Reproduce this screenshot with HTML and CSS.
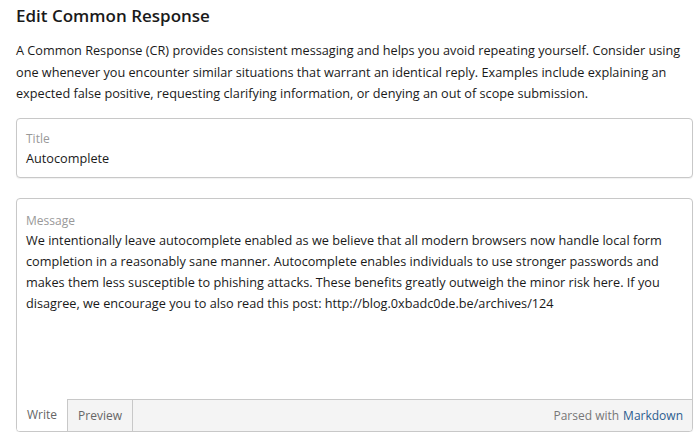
FILE: index.html
```html
<!DOCTYPE html>
<html>
<head>
<meta charset="utf-8">
<link rel="stylesheet" href="styles.css">
</head>
<body>
<div class="page">
  <h1 class="heading">Edit Common Response</h1>
  <p class="intro">A Common Response (CR) provides consistent messaging and helps you avoid repeating yourself. Consider using one whenever you encounter similar situations that warrant an identical reply. Examples include explaining an expected false positive, requesting clarifying information, or denying an out of scope submission.</p>
  <div class="field title-field">
    <div class="label">Title</div>
    <div class="value">Autocomplete</div>
  </div>
  <div class="field message-field">
    <div class="message-body">
      <div class="label">Message</div>
      <div class="value">We intentionally leave autocomplete enabled as we believe that all modern browsers now handle local form completion in a reasonably sane manner. Autocomplete enables individuals to use stronger passwords and makes them less susceptible to phishing attacks. These benefits greatly outweigh the minor risk here. If you disagree, we encourage you to also read this post: http://blog.0xbadc0de.be/archives/124</div>
    </div>
    <div class="toolbar">
      <div class="tab active">Write</div>
      <div class="tab">Preview</div>
      <div class="spacer"></div>
      <div class="parsed">Parsed with <span class="md">Markdown</span></div>
    </div>
  </div>
</div>
</body>
</html>
```
FILE: styles.css
```css
html, body {
  margin: 0;
  padding: 0;
  background: #fff;
}
body {
  font-family: "Open Sans", "Noto Sans", sans-serif;
  color: #1a1a1a;
}
.page {
  padding: 0 6px 0 16px;
}
.heading {
  margin: 0;
  padding-top: 4px;
  font-size: 17px;
  font-weight: 600;
  line-height: 24px;
  color: #1a1a1a;
}
.intro {
  margin: 12px 0 0;
  font-size: 12.7px;
  line-height: 21.5px;
  color: #1a1a1a;
}
.field {
  border: 1px solid #c8c8c8;
  border-radius: 4px;
  box-shadow: 0 1px 1px rgba(0,0,0,0.06);
  background: #fff;
}
.title-field {
  margin-top: 13px;
  height: 60px;
  box-sizing: border-box;
  padding: 11px 9px 0;
}
.label {
  font-size: 12px;
  line-height: 17px;
  color: #999;
}
.value {
  font-size: 12.7px;
  line-height: 21px;
  color: #1a1a1a;
}
.title-field .value {
  margin-top: 1px;
}
.message-field {
  margin-top: 20px;
  overflow: hidden;
}
.message-body {
  height: 200px;
  padding: 13px 9px 0;
  box-sizing: border-box;
}
.message-body .value {
  margin-top: 1px;
}
.toolbar {
  display: flex;
  height: 31px;
  background: #f4f4f4;
  border-top: 1px solid #c8c8c8;
  font-size: 12px;
}
.tab {
  display: flex;
  align-items: center;
  padding: 0 10px;
  color: #666;
  background: #f4f4f4;
  border-right: 1px solid #c8c8c8;
}
.tab.active {
  background: #fff;
  margin-top: -1px;
  color: #666;
}
.spacer {
  flex: 1;
}
.parsed {
  display: flex;
  align-items: center;
  padding-right: 9px;
  color: #777;
}
.md {
  color: #2c5d8f;
  margin-left: 4px;
}
```
